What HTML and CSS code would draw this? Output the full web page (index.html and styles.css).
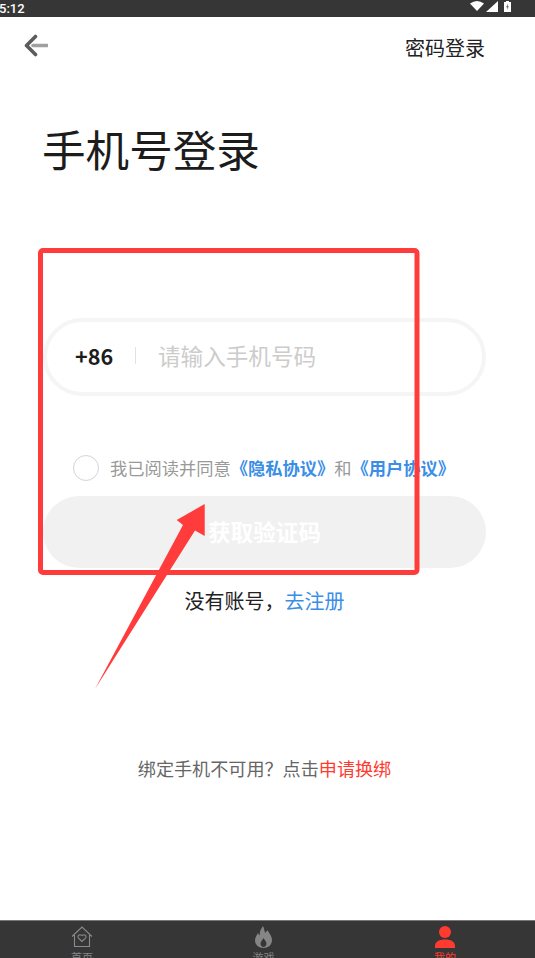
FILE: index.html
```html
<!DOCTYPE html>
<html lang="zh-CN">
<head>
<meta charset="utf-8">
<title>手机号登录</title>
<link rel="stylesheet" href="styles.css">
</head>
<body>
<div class="page">
  <div class="status">
    <span class="time">5:12</span>
    <div class="status-icons">
      <svg class="s-wifi" width="14" height="10" viewBox="0 0 14 10"><path d="M0 2.5 Q7 -2.5 14 2.5 L7 10 Z" fill="#fff"/></svg>
      <svg class="s-signal" width="12" height="11" viewBox="0 0 12 11"><path d="M12 0 V11 H0 Z" fill="#fff"/></svg>
      <svg class="s-batt" width="7" height="11" viewBox="0 0 7 11"><path d="M2 0 H5 V1 H7 V11 H0 V1 H2 Z" fill="#fff"/><path d="M4 2.5 L2.2 6.2 H3.4 L3 9 L4.8 5.2 H3.6 Z" fill="#555"/></svg>
    </div>
  </div>
  <header class="topbar">
    <svg class="back" width="24" height="24" viewBox="0 0 24 24"><path d="M9 11.5 H23" stroke="#a0a0a0" stroke-width="3.6" stroke-linecap="round" fill="none"/><path d="M11.5 2.5 L2.5 11.5 L11.5 20.5" stroke="#5c5c5c" stroke-width="3.6" stroke-linecap="round" stroke-linejoin="round" fill="none"/></svg>
    <span class="pw-login">密码登录</span>
  </header>
  <main class="main">
    <h1 class="title">手机号登录</h1>
    <div class="phone">
      <span class="code">+86</span>
      <span class="sep"></span>
      <span class="placeholder">请输入手机号码</span>
    </div>
    <div class="agree">
      <span class="check"></span>
      <span class="agree-text">我已阅读并同意<b class="link">《隐私协议》</b>和<b class="link">《用户协议》</b></span>
    </div>
    <div class="submit">获取验证码</div>
    <p class="register">没有账号&#65292;<span class="blue">去注册</span></p>
    <p class="rebind">绑定手机不可用&#65311;点击<span class="red">申请换绑</span></p>
  </main>
  <nav class="tabs">
    <div class="tab">
      <svg width="22" height="22" viewBox="0 0 22 22"><path d="M1 10.5 L11 1 L21 10.5 M3.5 9 V20.5 H18.5 V9" stroke="#8a8a8a" stroke-width="1.1" fill="none"/><path d="M11 15.5 L7.3 11.8 C6 10 8.5 7.6 11 9.6 C13.5 7.6 16 10 14.7 11.8 Z" stroke="#8a8a8a" stroke-width="1.1" fill="none"/></svg>
      <span>首页</span>
    </div>
    <div class="tab">
      <svg width="17" height="22" viewBox="0 0 17 22"><path d="M8 0 C9.5 3 9 5 10.5 7 C11 5.5 12 5 12.5 4 C14 7 17 10 17 14 C17 19 13 22 8.5 22 C4 22 0 19 0 14.5 C0 11 2 9 3 7 C3.5 8 4 9 4.7 9.3 C4.5 5.5 6 3 8 0 Z M8.5 12 C7.5 14 5.5 15.5 5.5 18 C5.5 19.5 7 21 8.5 21 C10 21 11.5 19.5 11.5 18 C11.5 15.5 9.5 14 8.5 12 Z" fill="#858585" fill-rule="evenodd"/></svg>
      <span>游戏</span>
    </div>
    <div class="tab active">
      <svg width="20" height="22" viewBox="0 0 20 22"><circle cx="10" cy="6" r="6" fill="#ff3b30"/><path d="M0 22 V20 C0 15.5 4.5 13.5 10 13.5 C15.5 13.5 20 15.5 20 20 V22 Z" fill="#ff3b30"/></svg>
      <span>我的</span>
    </div>
  </nav>
  <svg class="annot" width="535" height="958" viewBox="0 0 535 958">
    <rect x="40.5" y="250.5" width="376.5" height="322" rx="2.5" fill="none" stroke="#ff3b3b" stroke-width="5"/>
    <path d="M95 689 L183 525 L176.7 520 L204.7 504 L204.7 536 L195 530.5 Z" fill="#ff3b3b"/>
  </svg>
</div>
</body>
</html>
```

FILE: styles.css
```css
* { box-sizing: border-box; }
html, body { margin: 0; padding: 0; background: #fff; }
.page {
  position: relative;
  width: 535px;
  height: 958px;
  overflow: hidden;
  display: flex;
  flex-direction: column;
  font-family: "Noto Sans CJK SC", "Noto Sans", sans-serif;
}
.status {
  height: 17px;
  flex: none;
  background: #363636;
  color: #fff;
  display: flex;
  justify-content: space-between;
  align-items: center;
  padding-right: 24px;
}
.time {
  font: 500 13px/17px Roboto, sans-serif;
  margin-left: -1px;
}
.status-icons { display: flex; align-items: center; height: 17px; }
.s-wifi { margin-right: 2px; margin-top: -5px; }
.s-signal { margin-right: 6px; margin-top: -5px; }
.s-batt { margin-top: -5px; }
.topbar {
  flex: none;
  height: 62px;
  display: flex;
  justify-content: space-between;
  align-items: flex-start;
  padding: 17px 50px 0 24px;
}
.pw-login { font-size: 20px; line-height: 28px; color: #222; margin-top: 0; }
.main {
  flex: 1;
  min-height: 0;
  padding: 0 49px 0 43px;
}
.title {
  margin: 39px 0 0 -1px;
  font-size: 43.6px;
  line-height: 60px;
  font-weight: 400;
  color: #1c1c1c;
}
.phone {
  margin-top: 140px;
  height: 78px;
  border: 4px solid #f5f5f5;
  border-radius: 39px;
  display: flex;
  align-items: center;
  padding: 0 0 3px 28px;
}
.code { font-size: 21.6px; line-height: 30px; font-weight: 700; color: #1c1c1c; width: 60px; }
.sep { width: 1px; height: 17px; background: #e2e2e2; }
.placeholder { margin-left: 22px; font-size: 22.6px; line-height: 30px; color: #ccc; }
.agree {
  margin-top: 59px;
  display: flex;
  align-items: center;
  padding-left: 30px;
  height: 26px;
}
.check { width: 26px; height: 26px; border: 1px solid #d4d4d4; border-radius: 50%; flex: none; }
.agree-text { margin-left: 11px; font-size: 17.25px; line-height: 26px; color: #999; white-space: nowrap; }
.link { font-weight: 700; color: #3a8ee6; }
.submit {
  margin-top: 15px;
  height: 72px;
  border-radius: 36px;
  background: #f1f1f1;
  color: #fff;
  font-size: 22.6px;
  font-weight: 700;
  line-height: 72px;
  text-align: center;
}
.register {
  margin: 19px 0 0;
  text-align: center;
  font-size: 20px;
  line-height: 28px;
  color: #222;
}
.blue { color: #3a8ee6; }
.rebind {
  margin: 140px 0 0;
  text-align: center;
  font-size: 18.1px;
  line-height: 26px;
  color: #666;
  white-space: nowrap;
}
.red { color: #ff3b30; }
.tabs {
  flex: none;
  height: 38px;
  background: #363636;
  border-top: 1px solid #777;
  display: flex;
  justify-content: space-between;
  padding: 0 60px 0 52px;
  overflow: hidden;
}
.tab {
  width: 60px;
  display: flex;
  flex-direction: column;
  align-items: center;
  padding-top: 5px;
  color: #858585;
}
.tab svg { flex: none; display: block; }
.tab span { font-size: 11px; line-height: 15px; margin-top: 2px; }
.tab.active { color: #ff3b30; }
.annot { position: absolute; left: 0; top: 0; pointer-events: none; }
```
